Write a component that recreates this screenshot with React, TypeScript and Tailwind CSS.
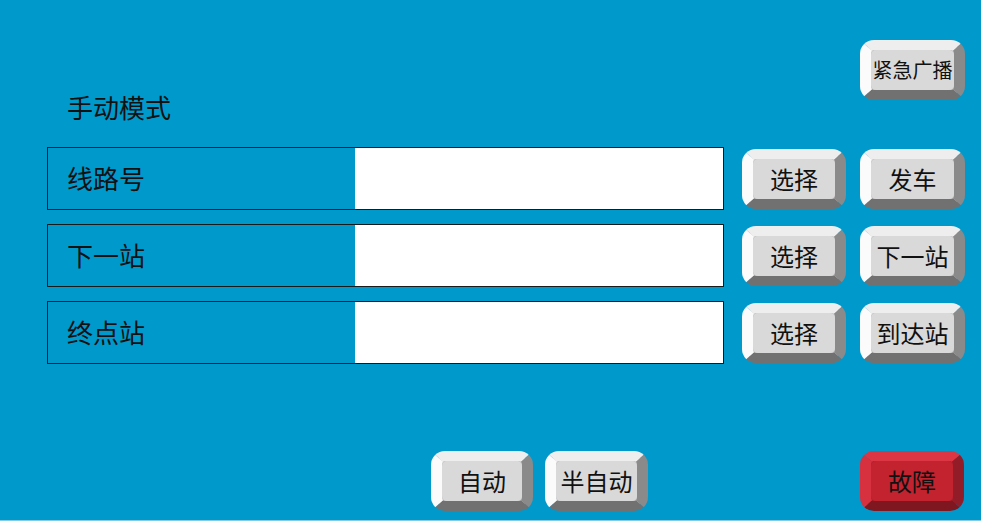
const FONT = '[font-family:"Noto_Sans_CJK_SC","Noto_Sans",sans-serif]';

type Tone = 'gray' | 'red';

function KeyButton({ label, tone = 'gray', small = false, w = 'w-[104px]' }: { label: string; tone?: Tone; small?: boolean; w?: string }) {
  const shell =
    tone === 'red'
      ? 'bg-[#b01f2b] border-t-[#dc3644] border-l-[#d7303f] border-r-[#921d28] border-b-[#7f1720]'
      : 'bg-[#c4c4c4] border-t-[#eeeeee] border-l-[#fbfbfb] border-r-[#8a8a8a] border-b-[#717171]';
  const face = tone === 'red' ? 'bg-[#c3222f]' : 'bg-[#d9d9d9]';
  return (
    <button
      className={`${w} h-[60px] shrink-0 rounded-[14px] border-t-[10px] border-l-[11px] border-r-[11px] border-b-[10px] ${shell}`}
    >
      <div
        className={`flex h-full w-full items-center justify-center rounded-[5px] ${face} ${small ? 'text-[20px]' : 'text-[24px]'} leading-none text-[#111]`}
      >
        {label}
      </div>
    </button>
  );
}

const ROWS = [
  { label: '线路号', action: '发车' },
  { label: '下一站', action: '下一站' },
  { label: '终点站', action: '到达站' },
];

export default function App() {
  return (
    <div className={`h-[521px] w-[981px] overflow-hidden border-b border-[#86cbe4] bg-[#0099cc] ${FONT}`}>
      <div className="flex pt-[40px]">
        <div className="flex-1 pl-[67px] pt-[52px] text-[26px] leading-[30px] text-[#111]">手动模式</div>
        <div className="pr-[16px]">
          <KeyButton label="紧急广播" small w="w-[105px]" />
        </div>
      </div>

      <div className="mt-[25px] flex flex-col gap-[14px]">
        {ROWS.map((r) => (
          <div key={r.label} className="flex items-center">
            <div className="ml-[47px] flex h-[63px] w-[677px] border border-[#1a1a1a]">
              <div className="flex w-[307px] items-center pl-[19px] pb-[2px] text-[26px] text-[#111]">{r.label}</div>
              <div className="flex-1 bg-white" />
            </div>
            <div className="ml-[18px] flex gap-[14px]">
              <KeyButton label="选择" />
              <KeyButton label={r.action} w="w-[105px]" />
            </div>
          </div>
        ))}
      </div>

      <div className="mt-[87px] flex items-center">
        <div className="ml-[431px] flex gap-[12px]">
          <KeyButton label="自动" w="w-[102px]" />
          <KeyButton label="半自动" w="w-[103px]" />
        </div>
        <div className="ml-auto mr-[17px]">
          <KeyButton label="故障" tone="red" />
        </div>
      </div>
    </div>
  );
}
